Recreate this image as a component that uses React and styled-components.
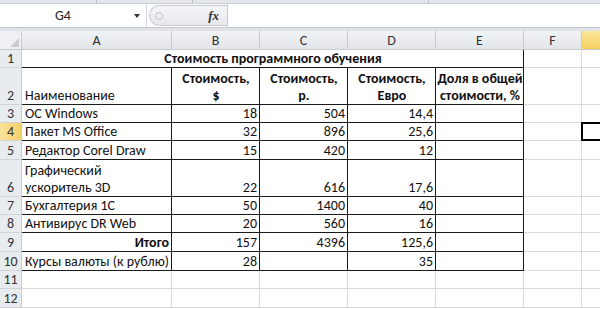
import React from 'react'
import styled, { createGlobalStyle } from 'styled-components'

const GlobalStyle = createGlobalStyle`
  body {
    margin: 0;
    background: #ffffff;
    font-family: Carlito, "Liberation Sans", Arial, sans-serif;
  }
`

const Window = styled.div`
  width: 600px;
  height: 309px;
  overflow: hidden;
  background: #ffffff;
  display: flex;
  flex-direction: column;
`

const RibbonEdge = styled.div`
  height: 4px;
  background: #e3e6ea;
  border-bottom: 1px solid #c9ced4;
  display: flex;
  box-sizing: border-box;
`
const RibbonGroup = styled.div`
  width: ${p => p.w}px;
  border-right: 1px solid #b9bec5;
`

const FormulaBar = styled.div`
  height: 23px;
  display: flex;
  align-items: stretch;
  background: #ffffff;
  border-bottom: 1px solid #c4c8ce;
`
const NameBox = styled.div`
  width: 146px;
  display: flex;
  align-items: center;
  font-size: 14px;
  color: #222;
  border-right: 1px solid #d4d7db;
`
const NameText = styled.span`
  flex: 1;
  text-align: center;
  padding-right: 8px;
`
const DropArrow = styled.span`
  width: 0;
  height: 0;
  margin-right: 6px;
  border-left: 3px solid transparent;
  border-right: 3px solid transparent;
  border-top: 4px solid #333;
`
const Pill = styled.div`
  width: 78px;
  margin: 1px 0 1px 2px;
  background: linear-gradient(#f4f5f7, #e6e8eb);
  border: 1px solid #c7cbd0;
  border-right: none;
  border-radius: 12px 0 0 12px;
  display: flex;
  align-items: center;
  justify-content: space-between;
  padding: 0 8px 0 5px;
  box-sizing: border-box;
`
const Dot = styled.span`
  width: 6px;
  height: 6px;
  border-radius: 50%;
  border: 1px solid #c3c7cc;
  background: #eceef0;
`
const Fx = styled.span`
  font-family: "Liberation Serif", serif;
  font-style: italic;
  font-weight: bold;
  font-size: 13px;
  color: #333;
`
const FormulaInput = styled.div`
  flex: 1;
  border-left: 1px solid #c7cbd0;
  background: #ffffff;
`

const Gap = styled.div`
  height: 3px;
  background: #dfe3e8;
`

const Sheet = styled.div`
  display: grid;
  grid-template-columns: 22px 150px 88px 88px 88px 88px 58px 64px;
  grid-template-rows: 19px 18px 37px 18px 18px 19px 37px 18px 18px 19px 19px 18px 19px;
  font-size: 14px;
  color: #111;
`

const Corner = styled.div`
  background: #eef0f3;
  border-right: 1px solid #c6cad0;
  border-bottom: 1px solid #c6cad0;
  position: relative;
  &::after {
    content: '';
    position: absolute;
    right: 2px;
    bottom: 2px;
    border-left: 9px solid transparent;
    border-bottom: 9px solid #c9ccd1;
  }
`

const ColHead = styled.div`
  background: ${p => (p.active ? 'linear-gradient(#fbe49c, #f6cf5f)' : 'linear-gradient(#f1f3f5, #e2e5e9)')};
  border-right: 1px solid #c6cad0;
  border-bottom: 1px solid #c6cad0;
  display: flex;
  align-items: center;
  justify-content: center;
  font-size: 14px;
  color: #333;
`

const RowHead = styled.div`
  background: ${p => (p.active ? 'linear-gradient(90deg, #fbe39a, #f6d06a)' : '#e9ecef')};
  border-right: 1px solid #c6cad0;
  border-bottom: 1px solid #d0d3d7;
  display: flex;
  align-items: flex-end;
  justify-content: center;
  font-size: 14px;
  line-height: 17px;
  color: #333;
`

const Cell = styled.div`
  grid-column: ${p => (p.span ? `span ${p.span}` : 'auto')};
  border-right: 1px solid ${p => (p.boxed ? '#1a1a1a' : '#d9dbde')};
  border-bottom: 1px solid ${p => (p.boxed ? '#1a1a1a' : '#d9dbde')};
  display: flex;
  flex-direction: column;
  justify-content: flex-end;
  align-items: ${p => (p.align === 'right' ? 'flex-end' : p.align === 'center' ? 'center' : 'flex-start')};
  text-align: ${p => p.align || 'left'};
  padding: 0 2px 0 3px;
  font-weight: ${p => (p.bold ? 'bold' : 'normal')};
  line-height: 17px;
  white-space: nowrap;
  position: relative;
`

const Selected = styled.div`
  position: absolute;
  left: -1px;
  top: -1px;
  right: -2px;
  bottom: -1px;
  border: 2px solid #000;
`

// G is only a sliver at the right edge, its letter falls outside the window
const cols = ['A', 'B', 'C', 'D', 'E', 'F', 'G']

const body = [
  ['ОС Windows', '18', '504', '14,4', ''],
  ['Пакет MS Office', '32', '896', '25,6', ''],
  ['Редактор Corel Draw', '15', '420', '12', ''],
  ['Графический\nускоритель 3D', '22', '616', '17,6', ''],
  ['Бухгалтерия 1С', '50', '1400', '40', ''],
  ['Антивирус DR Web', '20', '560', '16', ''],
  ['Итого', '157', '4396', '125,6', ''],
  ['Курсы валюты (к рублю)', '28', '', '35', ''],
]

const headers = ['Стоимость,\n$', 'Стоимость,\nр.', 'Стоимость,\nЕвро', 'Доля в общей\nстоимости, %']

const Lines = ({ text }) =>
  text.split('\n').map((t, i) => <span key={i}>{t}</span>)

const Blank = ({ n }) => (
  <>
    <Cell />
    <Cell>{n === 3 ? <Selected /> : null}</Cell>
  </>
)

export default function App() {
  return (
    <Window>
      <GlobalStyle />
      <RibbonEdge>
        <RibbonGroup w={96} />
        <RibbonGroup w={95} />
        <RibbonGroup w={235} />
      </RibbonEdge>
      <FormulaBar>
        <NameBox>
          <NameText>G4</NameText>
          <DropArrow />
        </NameBox>
        <Pill>
          <Dot />
          <Fx>fx</Fx>
        </Pill>
        <FormulaInput />
      </FormulaBar>
      <Gap />
      <Sheet>
        <Corner />
        {cols.map(c => (
          <ColHead key={c} active={c === 'G'}>{c === 'G' ? '' : c}</ColHead>
        ))}

        <RowHead>1</RowHead>
        <Cell span={5} boxed align="center" bold>Стоимость программного обучения</Cell>
        <Cell />
        <Cell />

        <RowHead>2</RowHead>
        <Cell boxed>Наименование</Cell>
        {headers.map(h => (
          <Cell key={h} boxed bold align="center"><Lines text={h} /></Cell>
        ))}
        <Cell />
        <Cell />

        {body.map((r, i) => (
          <React.Fragment key={i}>
            <RowHead active={i === 1}>{i + 3}</RowHead>
            <Cell boxed bold={i === 6} align={i === 6 ? 'right' : 'left'}>
              <Lines text={r[0]} />
            </Cell>
            {r.slice(1).map((v, j) => (
              <Cell key={j} boxed align="right">{v}</Cell>
            ))}
            <Blank n={i + 2} />
          </React.Fragment>
        ))}

        {[11, 12].map(n => (
          <React.Fragment key={n}>
            <RowHead>{n}</RowHead>
            {cols.map(c => <Cell key={c} />)}
          </React.Fragment>
        ))}
      </Sheet>
    </Window>
  )
}
